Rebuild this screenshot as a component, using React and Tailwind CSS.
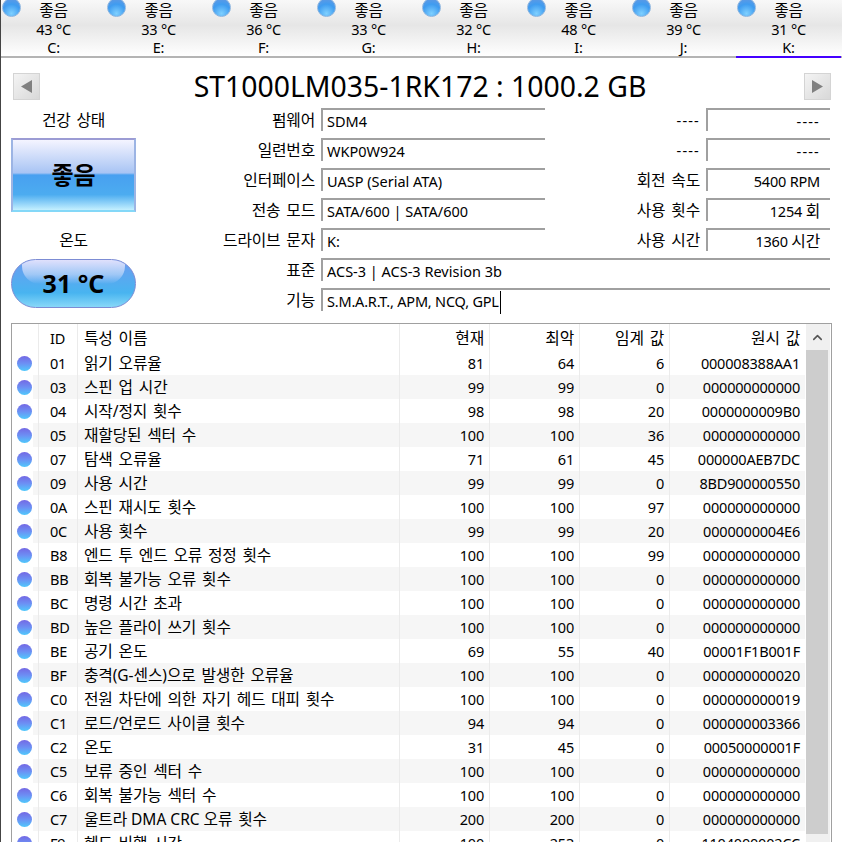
import { ChevronUp } from "lucide-react";

const drives = [
  { temp: "43 °C", letter: "C:" },
  { temp: "33 °C", letter: "E:" },
  { temp: "36 °C", letter: "F:" },
  { temp: "33 °C", letter: "G:" },
  { temp: "32 °C", letter: "H:" },
  { temp: "48 °C", letter: "I:" },
  { temp: "39 °C", letter: "J:" },
  { temp: "31 °C", letter: "K:", active: true },
];

const leftFields = [
  { label: "펌웨어", value: "SDM4" },
  { label: "일련번호", value: "WKP0W924" },
  { label: "인터페이스", value: "UASP (Serial ATA)" },
  { label: "전송 모드", value: "SATA/600 | SATA/600" },
  { label: "드라이브 문자", value: "K:" },
];

const rightFields = [
  { label: "----", value: "----" },
  { label: "----", value: "----" },
  { label: "회전 속도", value: "5400 RPM" },
  { label: "사용 횟수", value: "1254 회" },
  { label: "사용 시간", value: "1360 시간" },
];

const zero = "000000000000";

const attributes = [
  ["01", "읽기 오류율", 81, 64, 6, "000008388AA1"],
  ["03", "스핀 업 시간", 99, 99, 0, zero],
  ["04", "시작/정지 횟수", 98, 98, 20, "0000000009B0"],
  ["05", "재할당된 섹터 수", 100, 100, 36, zero],
  ["07", "탐색 오류율", 71, 61, 45, "000000AEB7DC"],
  ["09", "사용 시간", 99, 99, 0, "8BD900000550"],
  ["0A", "스핀 재시도 횟수", 100, 100, 97, zero],
  ["0C", "사용 횟수", 99, 99, 20, "0000000004E6"],
  ["B8", "엔드 투 엔드 오류 정정 횟수", 100, 100, 99, zero],
  ["BB", "회복 불가능 오류 횟수", 100, 100, 0, zero],
  ["BC", "명령 시간 초과", 100, 100, 0, zero],
  ["BD", "높은 플라이 쓰기 횟수", 100, 100, 0, zero],
  ["BE", "공기 온도", 69, 55, 40, "00001F1B001F"],
  ["BF", "충격(G-센스)으로 발생한 오류율", 100, 100, 0, "000000000020"],
  ["C0", "전원 차단에 의한 자기 헤드 대피 횟수", 100, 100, 0, "000000000019"],
  ["C1", "로드/언로드 사이클 횟수", 94, 94, 0, "000000003366"],
  ["C2", "온도", 31, 45, 0, "00050000001F"],
  ["C5", "보류 중인 섹터 수", 100, 100, 0, zero],
  ["C6", "회복 불가능 섹터 수", 100, 100, 0, zero],
  ["C7", "울트라 DMA CRC 오류 횟수", 200, 200, 0, zero],
  ["F9", "헤드 비행 시간", 100, 253, 0, "1104000002CC"],
];

// hangul runs are set a bit larger than the latin text around them
const Ko = ({ children }) => {
  if (children === "----") return <span className="tracking-[1.2px]">----</span>;
  return String(children)
    .split(/([가-힣]+(?: [가-힣]+)*)/)
    .map((part, i) =>
      i % 2 ? (
        <span key={i} className="text-[15.8px] tracking-[-0.2px] [word-spacing:2px]">
          {part}
        </span>
      ) : (
        part
      ),
    );
};

const Field = ({ label, value, labelWidth, width, right }) => (
  <div className="flex h-[30px] items-start">
    <div
      className={`${labelWidth} h-[24px] pr-[6px] text-right leading-[24px] whitespace-nowrap`}
    >
      <Ko>{label}</Ko>
    </div>
    <div
      className={`${width} h-[23px] border-t-2 border-l-2 border-[#a0a0a0] px-1 leading-[22px] whitespace-nowrap ${
        right ? "pr-[10px] text-right" : "tracking-normal"
      }`}
    >
      {typeof value === "string" ? <Ko>{value}</Ko> : value}
    </div>
  </div>
);

const NavButton = ({ flip }) => (
  <div className="flex h-[27px] w-[27px] items-center justify-center border border-[#d4d4d4] bg-gradient-to-br from-[#f4f4f4] to-[#d8d8d8]">
    <svg width="13" height="15" viewBox="0 0 13 15" className={flip ? "rotate-180" : ""}>
      <path d="M12 1 V14 L1 7.5 Z" fill="#808080" />
    </svg>
  </div>
);

const cols = "grid grid-cols-[21px_5px_39px_322px_90px_90px_90px_136px]";
const cell = "border-l border-[#ebebeb] pr-[5px] text-right";

const App = () => {
  return (
    <div className="relative h-[842px] w-[842px] overflow-hidden border-l border-[#444] bg-white font-['Noto_Sans','Noto_Sans_CJK_KR',sans-serif] text-[14.5px] tracking-[-0.2px] text-black">
      {/* drive tabs */}
      <div className="flex h-[58px] border-b-2 border-[#b4b4b4] bg-[linear-gradient(#f8f8f8,#e6e6e6_45%,#ffffff)]">
        {drives.map((d) => (
          <div
            key={d.letter}
            className={`relative -mb-[2px] h-[58px] w-[105px] pt-[1px] text-center leading-[18.5px] ${
              d.active ? "border-b-2 border-[#4400ff]" : ""
            }`}
          >
            <div className="absolute -top-[2px] left-[1px] h-[19px] w-[19px] rounded-full border border-[#8ab4e0] bg-[radial-gradient(circle_at_50%_85%,#7fd0ff,#3f9cf0_55%,#6a98e0)]" />
            <div>
              <Ko>좋음</Ko>
            </div>
            <div>{d.temp}</div>
            <div>{d.letter}</div>
          </div>
        ))}
      </div>

      {/* title */}
      <div className="flex items-center justify-between pt-[12px] pr-[11px] pl-[12px]">
        <NavButton />
        <div className="pr-[4px] text-[28.4px] leading-[32px] tracking-normal">
          ST1000LM035-1RK172 : 1000.2 GB
        </div>
        <NavButton flip />
      </div>

      <div className="flex pt-[6px] pl-[10px]">
        {/* health */}
        <div className="w-[125px] text-center">
          <div className="h-[30px] leading-[24px]">
            <Ko>건강 상태</Ko>
          </div>
          <div className="flex h-[74px] items-center justify-center border-2 border-t-[#9c9cd4] border-r-[#9cb4e4] border-b-[#84d8f8] border-l-[#9cb4e4] bg-[linear-gradient(#f4f4ff,#a8c4f4_47%,#48a0f0_50%,#4cacf0_78%,#c4f0ff)] text-[24px] font-bold">
            좋음
          </div>
          <div className="mt-[16px] h-[31px] leading-[24px]">
            <Ko>온도</Ko>
          </div>
          <div className="relative flex h-[49px] items-center justify-center overflow-hidden rounded-full border border-[#7c8cd4] bg-[linear-gradient(#6c9cf0,#48b4f0_70%,#88d8f8)] text-[25px] font-bold">
            <div className="absolute top-0 right-[10px] left-[10px] h-[24px] rounded-b-[18px] bg-[linear-gradient(#e0e0fc,#a0c8f6_60%,transparent)]" />
            <span className="relative tracking-normal">31 °C</span>
          </div>
        </div>

        {/* drive info */}
        <div className="flex-1">
          <div className="flex">
            <div>
              {leftFields.map((f) => (
                <Field key={f.label} {...f} labelWidth="w-[185px]" width="w-[224px]" />
              ))}
            </div>
            <div>
              {rightFields.map((f, i) => (
                <Field key={i} {...f} labelWidth="w-[161px]" width="w-[124px]" right />
              ))}
            </div>
          </div>
          <Field label="표준" value="ACS-3 | ACS-3 Revision 3b" labelWidth="w-[185px]" width="w-[509px]" />
          <Field
            label="기능"
            value={
              <span className="border-r border-black pr-[1px] pb-[3px] tracking-[-0.2px]">S.M.A.R.T., APM, NCQ, GPL</span>
            }
            labelWidth="w-[185px]"
            width="w-[509px]"
          />
        </div>
      </div>

      {/* smart table */}
      <div className="mt-[5px] ml-[10px] flex h-[530px] w-[821px] border border-[#a0a0a0]">
        <div className="w-[794px] leading-[24px]">
          <div className={`${cols} h-[27px] leading-[28px]`}>
            <div className="col-span-2" />
            <div className="border-l border-[#ebebeb] pl-[11px]">ID</div>
            <div className="border-l border-[#ebebeb] pl-[6px]">
              <Ko>특성 이름</Ko>
            </div>
            <div className={cell}>
              <Ko>현재</Ko>
            </div>
            <div className={cell}>
              <Ko>최악</Ko>
            </div>
            <div className={cell}>
              <Ko>임계 값</Ko>
            </div>
            <div className={cell}>
              <Ko>원시 값</Ko>
            </div>
          </div>
          {attributes.map(([id, name, cur, worst, thr, raw], i) => {
            const shade = i % 2 ? "bg-[#f6f6f6]" : "";
            return (
              <div key={id} className={`${cols} h-[24px]`}>
                <div className="flex items-center pl-[5px]">
                  <div className="h-[15px] w-[15px] rounded-full bg-[linear-gradient(#7468e4,#6c90f4_50%,#50c8fc)]" />
                </div>
                <div className={shade} />
                <div className={`border-l border-[#ebebeb] pl-[11px] ${shade}`}>{id}</div>
                <div className={`border-l border-[#ebebeb] pl-[6px] text-[15.5px] tracking-normal whitespace-nowrap ${shade}`}>
                  <Ko>{name}</Ko>
                </div>
                <div className={`${cell} ${shade}`}>{cur}</div>
                <div className={`${cell} ${shade}`}>{worst}</div>
                <div className={`${cell} ${shade}`}>{thr}</div>
                <div className={`${cell} ${shade}`}>{raw}</div>
              </div>
            );
          })}
        </div>
        {/* scrollbar */}
        <div className="flex w-[24px] flex-col bg-[#f0f0f0] pr-[2px]">
          <div className="flex h-[26px] items-center justify-center">
            <ChevronUp size={15} strokeWidth={2.5} color="#555" />
          </div>
          <div className="h-[484px] bg-[#cdcdcd]" />
        </div>
      </div>
    </div>
  );
};

export default App;
